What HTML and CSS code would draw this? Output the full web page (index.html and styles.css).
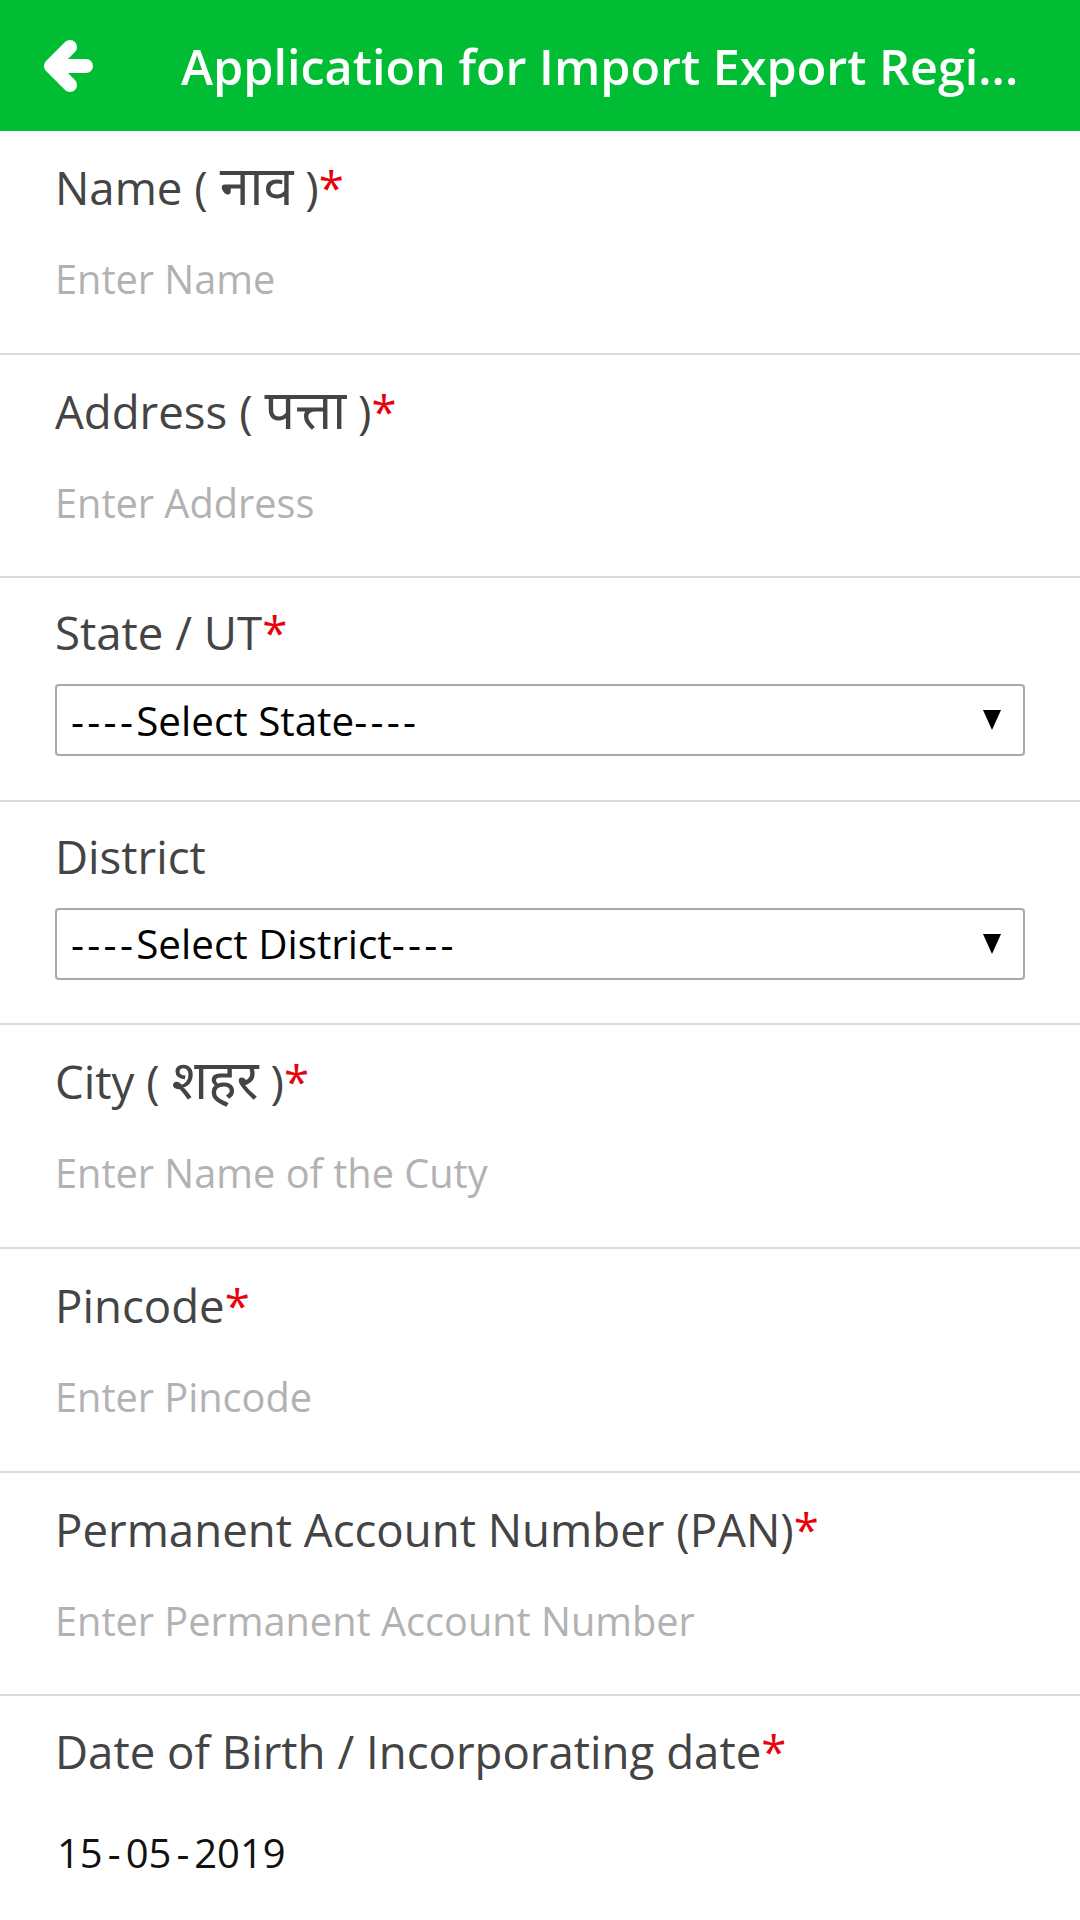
FILE: index.html
```html
<!DOCTYPE html>
<html lang="en">
<head>
<meta charset="utf-8">
<title>Application for Import Export Registration</title>
<link rel="stylesheet" href="styles.css">
</head>
<body>
<header class="appbar">
  <svg class="back" width="64" height="60" viewBox="0 0 64 60" aria-hidden="true">
    <path d="M15 30 L50 30 M34 11 L15 30 L34 49" fill="none" stroke="#fff" stroke-width="14" stroke-linecap="round" stroke-linejoin="round"/>
  </svg>
  <h1 class="title">Application for Import Export Regi...</h1>
</header>
<main class="form">
  <div class="field">
    <label class="label">Name ( <span class="hi">नाव</span> )<span class="req">*</span></label>
    <input class="input" type="text" placeholder="Enter Name">
  </div>
  <div class="field">
    <label class="label">Address ( <span class="hi">पत्ता</span> )<span class="req">*</span></label>
    <input class="input" type="text" placeholder="Enter Address">
  </div>
  <div class="field field-select">
    <label class="label">State / UT<span class="req">*</span></label>
    <div class="select" role="combobox">
      <span class="dash">----</span>Select State<span class="dash">----</span>
      <span class="caret"></span>
    </div>
  </div>
  <div class="field field-select">
    <label class="label">District</label>
    <div class="select" role="combobox">
      <span class="dash">----</span>Select District<span class="dash">----</span>
      <span class="caret"></span>
    </div>
  </div>
  <div class="field">
    <label class="label">City ( <span class="hi">शहर</span> )<span class="req">*</span></label>
    <input class="input" type="text" placeholder="Enter Name of the Cuty">
  </div>
  <div class="field">
    <label class="label">Pincode<span class="req">*</span></label>
    <input class="input" type="text" placeholder="Enter Pincode">
  </div>
  <div class="field">
    <label class="label">Permanent Account Number (PAN)<span class="req">*</span></label>
    <input class="input" type="text" placeholder="Enter Permanent Account Number">
  </div>
  <div class="field field-last">
    <label class="label">Date of Birth / Incorporating date<span class="req">*</span></label>
    <div class="date">15<span class="sep">-</span>05<span class="sep">-</span>2019</div>
  </div>
</main>
</body>
</html>
```

FILE: styles.css
```css
html, body {
  margin: 0;
  padding: 0;
  background: #fff;
}
body {
  font-family: "Open Sans", "Noto Sans", "DejaVu Sans", sans-serif;
  width: 1080px;
  height: 1920px;
  overflow: hidden;
}
.appbar {
  height: 131px;
  background: #01bd33;
  display: flex;
  align-items: center;
}
.back {
  margin-left: 36px;
  flex: none;
}
.title {
  margin: 0 0 0 81px;
  color: #fff;
  font-size: 48.5px;
  font-weight: 600;
  white-space: nowrap;
}
.form {
  display: flex;
  flex-direction: column;
}
.field {
  box-sizing: border-box;
  height: 223.6px;
  border-bottom: 2px solid #d9d9d9;
  padding: 26px 55px 0;
  display: flex;
  flex-direction: column;
}
.label {
  display: block;
  height: 60px;
  line-height: 60px;
  font-size: 45.6px;
  color: #444;
  white-space: nowrap;
}
.hi {
  font-size: 1.18em;
  line-height: 0;
}
.req {
  color: #e8000b;
}
.input {
  margin-top: 32px;
  height: 60px;
  padding: 0;
  border: 0;
  outline: 0;
  font-family: inherit;
  font-size: 39.7px;
  color: #111;
  background: transparent;
}
.input::placeholder {
  color: #b2b2b2;
}
.field-select {
  padding-top: 24px;
}
.select {
  position: relative;
  margin-top: 22px;
  box-sizing: border-box;
  height: 72px;
  border: 2px solid #a8a8a8;
  border-radius: 4px;
  background: #fff;
  padding: 0 14px;
  display: flex;
  align-items: center;
  font-size: 40.4px;
  color: #000;
  white-space: pre;
}
.dash {
  letter-spacing: 3.3px;
}
.caret {
  position: absolute;
  right: 22px;
  top: 24px;
  width: 0;
  height: 0;
  border-left: 9px solid transparent;
  border-right: 9px solid transparent;
  border-top: 20px solid #000;
}
.field-last {
  border-bottom: 0;
  height: auto;
  padding-top: 25px;
}
.date {
  margin-top: 42px;
  height: 60px;
  line-height: 60px;
  font-size: 40px;
  color: #111;
  padding-left: 2px;
}
.sep {
  margin: 0 5px;
}
```
